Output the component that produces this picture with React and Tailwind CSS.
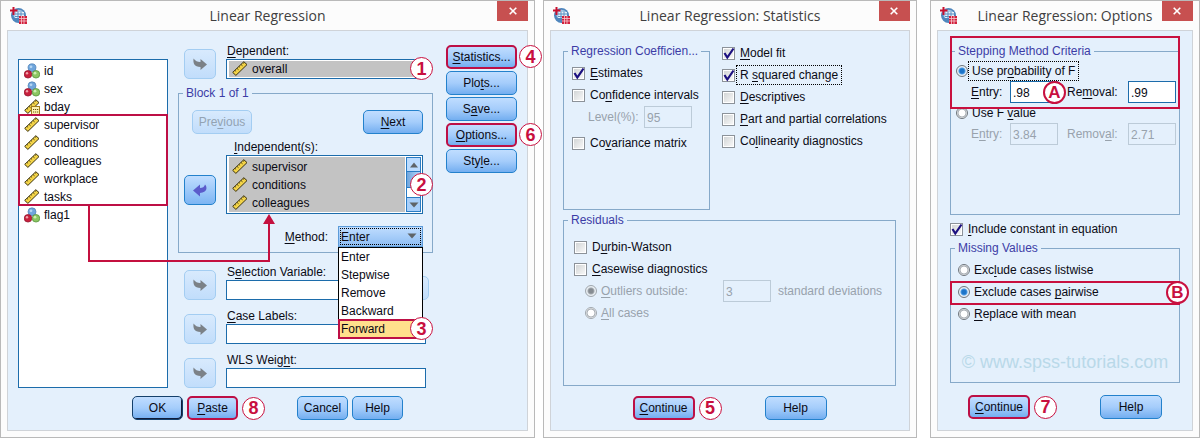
import React from 'react';

const VARIABLES = [
    { name: 'id', type: 'nominal' },
    { name: 'sex', type: 'nominal' },
    { name: 'bday', type: 'date' },
];
const PREDICTORS = ['supervisor', 'conditions', 'colleagues', 'workplace', 'tasks'];
const METHODS = ['Enter', 'Stepwise', 'Remove', 'Backward', 'Forward'];

// "_" marks the access key: "_Paste" underlines the P
const Mnemonic = ({ text }) => {
    const i = text.indexOf('_');
    if (i < 0) return <>{text}</>;
    return (
        <>
            {text.slice(0, i)}
            <span className="underline decoration-1 underline-offset-2">{text[i + 1]}</span>
            {text.slice(i + 2)}
        </>
    );
};

/* ---------- icons ---------- */

const AppIcon = () => (
    <svg width="17" height="17" viewBox="0 0 17 17" aria-hidden="true">
        <circle cx="8.5" cy="8.5" r="7.5" fill="#4f86bd" />
        <path d="M3 5.5a7 7 0 0 1 11 0l-2 5H4z" fill="#a9cbe6" />
        <path d="M6 5h8v6H5z" fill="#e8f1f8" />
        <path d="M5 7h10M5 9.5h9M8 4.5v7M11 4.5v7" stroke="#5b8fc2" strokeWidth="1" />
        <path d="M3.5 0v8M0 3.5h7.5" stroke="#c8102e" strokeWidth="2" />
        <rect x="9" y="9" width="8" height="8" fill="#d2203c" />
        <path d="M9 11.5h8M9 14h8M11.5 9v8M14 9v8" stroke="#f6cdd2" strokeWidth="0.8" />
    </svg>
);

const NominalIcon = () => (
    <svg width="16" height="16" viewBox="0 0 16 16" className="shrink-0" aria-hidden="true">
        <circle cx="8" cy="4.8" r="4" fill="#6fa5dc" stroke="#4d7fb5" strokeWidth="0.7" />
        <circle cx="4" cy="11.3" r="3.8" fill="#c8203c" stroke="#8a1028" strokeWidth="0.7" />
        <circle cx="12" cy="11.3" r="3.8" fill="#8cc662" stroke="#4c8a34" strokeWidth="0.7" />
        <circle cx="7" cy="3.8" r="1.4" fill="#b5d5f3" />
        <circle cx="3" cy="10.2" r="1.2" fill="#f0a0a8" />
        <circle cx="11" cy="10.2" r="1.4" fill="#cdeeb0" />
    </svg>
);

const ScaleIcon = ({ dated }) => (
    <svg width="16" height="16" viewBox="0 0 16 16" className="shrink-0" aria-hidden="true">
        <path d="M0.7 11.4L11.8 0.7L15 3.6L3.9 14.4z" fill="#f5d548" stroke="#3a3210" strokeWidth="1" strokeLinejoin="round" />
        <path d="M3 9.4l1.1 1M5 7.4l1.6 1.4M7 5.5l1.1 1M9 3.5l1.6 1.4M11 1.6l1.1 1" stroke="#3a3210" strokeWidth="0.8" />
        {dated && (
            <>
                <rect x="7.5" y="7.5" width="8" height="8" fill="#fdf3b0" stroke="#a07c1c" />
                <path d="M9 10.5h1.2M11 10.5h1.2M13 10.5h1.2M9 13h1.2M11 13h1.2M13 13h1.2" stroke="#6b5410" strokeWidth="1.2" />
            </>
        )}
    </svg>
);

const MoveIcon = ({ back }) => (
    <svg width="16" height="14" viewBox="0 0 16 14" fill={back ? '#5b5bcb' : '#7b8187'} aria-hidden="true">
        {back ? (
            <path d="M1 7.5L8 1.5V5C10.5 5 12.5 4 13 1.5C15.5 4 15.5 9.5 8 10V13.5z" />
        ) : (
            <path d="M15 7.5L8.5 2V5C6 5.2 3.5 4 1.5 1.5C1 6 2 10 8.5 10V13z" />
        )}
    </svg>
);

const Triangle = ({ up }) => (
    <svg width="10" height="6" viewBox="0 0 10 6" fill="#5f6468" aria-hidden="true">
        <path d={up ? 'M1 5.5L5 0.5L9 5.5z' : 'M0.5 0.5L9.5 0.5L5 5.5z'} />
    </svg>
);

/* ---------- controls ---------- */

const BUTTON_LOOKS = {
    normal: 'border border-[#2381cc]',
    primary: 'border border-[#14406b] shadow-[inset_-1px_-1px_0_#101c38]',
    marked: 'border-2 border-[#bd0f45]',
};

const Button = ({ text, look = 'normal', className = '', disabled }) => (
    <button
        type="button"
        disabled={disabled}
        className={`h-6 shrink-0 rounded-[5px] text-center leading-4 ${className} ${
            disabled
                ? 'border border-[#a3cdf2] bg-linear-to-b from-[#d8eafd] to-[#c1ddfb] text-[#93a3b3]'
                : `bg-linear-to-b from-[#c0ddff] via-[#a5cdfb] to-[#73aef0] text-[#0a0a14] ${BUTTON_LOOKS[look]}`
        }`}
    >
        <Mnemonic text={text} />
    </button>
);

const MoveButton = ({ label, back }) => (
    <button
        type="button"
        aria-label={label}
        className={`flex h-[30px] w-8 shrink-0 items-center justify-center rounded-[5px] border bg-linear-to-b ${
            back ? 'border-[#2381cc] from-[#c0ddff] to-[#7db5f3]' : 'border-[#a3cdf2] from-[#d8eafd] to-[#c1ddfb]'
        }`}
    >
        <MoveIcon back={back} />
    </button>
);

const Checkbox = ({ id, text, checked, focused }) => (
    <div className="flex h-[22px] items-center gap-[2px]">
        <span className="relative size-[13px] shrink-0">
            <input
                id={id}
                type="checkbox"
                defaultChecked={checked}
                className="peer block size-[13px] appearance-none border border-[#8c9299] bg-linear-to-br from-[#cfd2d3] to-[#fbfbfb] shadow-[inset_0_0_0_1px_#ffffff]"
            />
            <svg viewBox="0 0 13 13" className="pointer-events-none absolute inset-0 hidden peer-checked:block" aria-hidden="true">
                <path d="M2.5 6L5.3 10.5L11.5 1.5" fill="none" stroke="#1c1080" strokeWidth="2.2" />
            </svg>
        </span>
        <label
            htmlFor={id}
            className={`px-[3px] whitespace-nowrap ${focused ? 'py-px outline outline-dotted outline-black' : ''}`}
        >
            <Mnemonic text={text} />
        </label>
    </div>
);

const Radio = ({ id, name, text, checked, disabled, focused }) => (
    <div className="flex h-full items-center gap-px">
        <input
            id={id}
            name={name}
            type="radio"
            defaultChecked={checked}
            disabled={disabled}
            className="size-3 shrink-0 appearance-none rounded-full border border-[#6e757c] bg-[radial-gradient(circle,#ffffff_3px,#9aa1a8_4px,#ffffff_5px)] checked:bg-[radial-gradient(circle,#1d74c8_2px,#4b9be4_3px,#e6eef5_4px)] disabled:border-[#a0a7ad] disabled:checked:bg-[radial-gradient(circle,#858b91_2px,#a2a8ad_3px,#e8eef3_4px)]"
        />
        <label
            htmlFor={id}
            className={`px-[3px] whitespace-nowrap ${disabled ? 'text-[#98a2ac]' : ''} ${
                focused ? 'py-px outline outline-dotted outline-black' : ''
            }`}
        >
            <Mnemonic text={text} />
        </label>
    </div>
);

const NumberBox = ({ id, value, disabled, label }) => (
    <input
        id={id}
        type="text"
        aria-label={label}
        defaultValue={value}
        disabled={disabled}
        className="h-[22px] w-12 shrink-0 border border-[#1c6cab] bg-white pt-px pl-[2px] leading-4 disabled:border-[#bccbd8] disabled:bg-transparent disabled:text-[#98a2ac]"
    />
);

const Group = ({ title, className = '', bodyClass = '', children }) => (
    <fieldset className={`min-w-0 border border-[#86a9c9] ${className}`}>
        <legend className="ml-1 px-[3px] leading-4 whitespace-nowrap text-[#3c3ca6]">{title}</legend>
        <div className={bodyClass}>{children}</div>
    </fieldset>
);

const Variable = ({ name, type = 'scale', className = 'h-[18px]' }) => (
    <li className={`flex items-center gap-1 ${className}`}>
        {type === 'nominal' ? <NominalIcon /> : <ScaleIcon dated={type === 'date'} />}
        {name}
    </li>
);

// numbered step marker
const Step = ({ children, className = 'border text-lg' }) => (
    <span
        className={`z-20 flex size-[23px] shrink-0 items-center justify-center rounded-full border-[#c8103f] bg-white leading-none font-bold text-[#c8103f] ${className}`}
    >
        {children}
    </span>
);

const Dialog = ({ title, className = '', bodyClass = '', children }) => (
    <section className={`relative flex min-w-0 flex-col border border-[#b9b9b9] bg-[#fcfcfc] px-[6px] pb-[6px] ${className}`}>
        <header className="flex h-[29px] shrink-0 items-center justify-between">
            <span className="w-[31px] pl-[3px]">
                <AppIcon />
            </span>
            <h2 className="font-['Open_Sans',sans-serif] text-sm leading-5 whitespace-nowrap text-[#404040]">{title}</h2>
            <button
                type="button"
                aria-label="Close"
                className="flex h-5 w-[31px] items-center justify-center self-start bg-[#c75050]"
            >
                <svg width="8" height="8" viewBox="0 0 8 8" stroke="#fff" strokeWidth="1.6" aria-hidden="true">
                    <path d="M0.7 0.7L7.3 7.3M7.3 0.7L0.7 7.3" />
                </svg>
            </button>
        </header>
        <div className={`flex flex-1 flex-col border border-[#cfd3d8] bg-[#e4f0fc] ${bodyClass}`}>{children}</div>
    </section>
);

const TextField = ({ id, text, className = '', children }) => (
    <div className={`flex items-end gap-[10px] pl-[6px] ${className}`}>
        <MoveButton label={`Move to ${text.replace('_', '')}`} />
        <div className="min-w-0 flex-1">
            <label htmlFor={id} className="block pl-px leading-4">
                <Mnemonic text={text} />
            </label>
            <input id={id} type="text" className="block h-5 w-full border border-[#1c6cab] bg-white px-1" />
        </div>
        {children}
    </div>
);

const DialogFooter = ({ step, className = '' }) => (
    <div className={`flex justify-center gap-1 ${className}`}>
        <Button text="_Continue" look="marked" className="w-[62px]" />
        <div className="flex w-[62px] items-center">
            <Step>{step}</Step>
        </div>
        <Button text="Help" className="w-[62px]" />
    </div>
);

/* ---------- dialogs ---------- */

const MethodPicker = () => (
    <div className="flex items-center justify-end gap-[10px]">
        <label htmlFor="method">
            <Mnemonic text="_Method:" />
        </label>
        <div className="relative w-[85px]">
            <select
                id="method"
                defaultValue="Enter"
                className="block h-[21px] w-full appearance-none border border-[#5c9bd8] bg-linear-to-b from-[#c0ddff] to-[#8dbdf3] pl-[2px] leading-4 outline outline-dotted -outline-offset-3 outline-black"
            >
                {METHODS.map(m => (
                    <option key={m}>{m}</option>
                ))}
            </select>
            <span className="pointer-events-none absolute top-[7px] right-[6px]">
                <Triangle />
            </span>
            <ul className="absolute top-full left-0 z-10 w-full border border-black bg-white">
                {METHODS.map(m => (
                    <li
                        key={m}
                        className={`relative h-[18px] pl-[2px] leading-[18px] ${m === 'Forward' ? 'bg-[#ffe08c]' : ''}`}
                    >
                        {m}
                        {m === 'Forward' && (
                            <>
                                <span className="absolute -inset-px border-2 border-[#bd0f45]" />
                                <Step className="absolute -top-[3px] -right-[11px] border text-lg">3</Step>
                            </>
                        )}
                    </li>
                ))}
            </ul>
        </div>
    </div>
);

const RegressionDialog = () => (
    <Dialog title="Linear Regression" className="flex-[521_1_0%]" bodyClass="pb-[10px]">
        <div className="flex px-[10px]">
            <ul className="mt-7 w-[150px] shrink-0 border border-[#1c6cab] bg-white pt-[2px]">
                {VARIABLES.map(v => (
                    <Variable key={v.name} name={v.name} type={v.type} className="h-[18px] pl-[5px]" />
                ))}
                <li className="relative">
                    <ul>
                        {PREDICTORS.map(p => (
                            <Variable key={p} name={p} className="h-[18px] pl-[5px]" />
                        ))}
                    </ul>
                    <span className="absolute -inset-x-px -top-[2px] bottom-0 border-2 border-[#bd0f45]" />
                    {/* connector to the Independent(s) list */}
                    <svg
                        width="190"
                        height="56"
                        viewBox="0 0 190 56"
                        className="pointer-events-none absolute top-full left-[68px] z-10"
                        aria-hidden="true"
                    >
                        <path d="M2 0V55H182V16" fill="none" stroke="#c4103f" strokeWidth="2" />
                        <path d="M182 8L188 18H176z" fill="#c4103f" />
                    </svg>
                </li>
                <Variable name="flag1" type="nominal" className="h-[18px] pl-[5px]" />
            </ul>

            <div className="ml-[10px] min-w-0 flex-1 pt-3">
                <div className="flex items-end gap-[10px] pr-[7px] pl-[6px]">
                    <MoveButton label="Move to Dependent" />
                    <div className="min-w-0 flex-1">
                        <div className="pl-px leading-4">
                            <Mnemonic text="_Dependent:" />
                        </div>
                        <div className="relative border border-[#1c6cab] bg-white p-px pl-[2px]">
                            <ul className="bg-[#c3c3c3]">
                                <Variable name="overall" className="h-4 pl-[3px]" />
                            </ul>
                            <Step className="absolute -top-[3px] -right-2 border text-lg">1</Step>
                        </div>
                    </div>
                </div>

                <Group title="Block 1 of 1" className="mt-[6px]" bodyClass="pt-[9px] pr-[9px] pb-[5px] pl-[5px]">
                    <div className="flex justify-between pl-2">
                        <Button text="Pre_vious" className="w-[60px]" disabled />
                        <Button text="_Next" className="w-[60px]" />
                    </div>
                    <div className="mt-[5px] flex items-end gap-[10px]">
                        <div className="mb-[9px] flex">
                            <MoveButton label="Remove from Independent(s)" back />
                        </div>
                        <div className="min-w-0 flex-1">
                            <div className="pl-2 leading-4">
                                <Mnemonic text="_Independent(s):" />
                            </div>
                            <div className="relative flex border border-[#1c6cab] bg-white p-px pl-[2px]">
                                <ul className="flex-1 bg-[#c3c3c3] pt-px">
                                    {PREDICTORS.slice(0, 3).map(p => (
                                        <Variable key={p} name={p} className="h-[18px] pl-[3px]" />
                                    ))}
                                </ul>
                                <div className="ml-px flex w-[15px] flex-col border-x border-[#2a7cc4] bg-white">
                                    <button
                                        type="button"
                                        aria-label="Scroll up"
                                        className="flex h-[15px] items-center justify-center border-y border-[#2a7cc4] bg-[#bcdcff]"
                                    >
                                        <Triangle up />
                                    </button>
                                    <span className="h-4 border-b border-[#2a7cc4] bg-linear-to-r from-[#6fa5dd] to-[#b8d8fa]" />
                                    <button
                                        type="button"
                                        aria-label="Scroll down"
                                        className="mt-auto flex h-[15px] items-center justify-center border-y border-[#2a7cc4] bg-[#a9d0fb]"
                                    >
                                        <Triangle />
                                    </button>
                                </div>
                                <Step className="absolute top-[17px] -right-[11px] border text-lg">2</Step>
                            </div>
                        </div>
                    </div>
                    <div className="mt-3">
                        <MethodPicker />
                    </div>
                </Group>

                <TextField id="selection" text="S_election Variable:" className="mt-[11px] pr-1">
                    <Button text="Rule..." className="-ml-[7px] w-[60px]" disabled />
                </TextField>
                <TextField id="case-labels" text="_Case Labels:" className="mt-2 pr-[7px]" />
                <TextField id="wls" text="WLS Weig_ht:" className="mt-2 pr-[7px]" />
            </div>

            <div className="ml-[13px] flex w-[71px] shrink-0 flex-col gap-[2px] pt-[14px]">
                <div className="relative flex flex-col">
                    <Button text="_Statistics..." look="marked" />
                    <Step className="absolute top-0 left-[73px] border text-lg">4</Step>
                </div>
                <Button text="Plo_ts..." />
                <Button text="S_ave..." />
                <div className="relative flex flex-col">
                    <Button text="_Options..." look="marked" />
                    <Step className="absolute top-0 left-[73px] border text-lg">6</Step>
                </div>
                <Button text="Sty_le..." />
            </div>
        </div>

        <div className="mt-2 flex justify-center gap-1">
            <Button text="OK" look="primary" className="w-[51px]" />
            <Button text="_Paste" look="marked" className="w-[51px]" />
            <div className="flex w-[51px] items-center">
                <Step>8</Step>
            </div>
            <Button text="Cancel" className="w-[51px]" />
            <Button text="Help" className="w-[51px]" />
        </div>
    </Dialog>
);

const StatisticsDialog = () => (
    <Dialog title="Linear Regression: Statistics" className="ml-2 flex-[360_1_0%]" bodyClass="pt-[11px] pr-[13px] pb-[10px] pl-3">
        <div className="flex">
            <Group
                title="Regression Coefficien..."
                className="mt-px min-h-[167px] w-[147px] shrink-0"
                bodyClass="pt-[3px] pl-2"
            >
                <Checkbox id="estimates" text="_Estimates" checked />
                <Checkbox id="confidence" text="Co_nfidence intervals" />
                <div className="flex items-center pl-4 text-[#98a2ac]">
                    <label htmlFor="level" className="w-14">
                        Level(%):
                    </label>
                    <NumberBox id="level" value="95" disabled />
                </div>
                <div className="mt-1">
                    <Checkbox id="covariance" text="Co_variance matrix" />
                </div>
            </Group>
            <div className="ml-3">
                <Checkbox id="model-fit" text="_Model fit" checked />
                <Checkbox id="r-squared" text="R _squared change" checked focused />
                <Checkbox id="descriptives" text="_Descriptives" />
                <Checkbox id="partial" text="_Part and partial correlations" />
                <Checkbox id="collinearity" text="Co_llinearity diagnostics" />
            </div>
        </div>
        <Group title="Residuals" className="mt-[2px] flex-1" bodyClass="pt-[8px] pl-[10px]">
            <Checkbox id="durbin" text="D_urbin-Watson" />
            <Checkbox id="casewise" text="_Casewise diagnostics" />
            <div className="flex items-center pl-[11px] text-[#98a2ac]">
                <div className="w-[138px]">
                    <Radio id="outliers" name="casewise-scope" text="_Outliers outside:" checked disabled />
                </div>
                <NumberBox value="3" label="Standard deviations" disabled />
                <span className="ml-[7px]">standard deviations</span>
            </div>
            <div className="h-[22px] pl-[11px]">
                <Radio id="all-cases" name="casewise-scope" text="_All cases" disabled />
            </div>
        </Group>
        <DialogFooter step="5" className="mt-[10px]" />
    </Dialog>
);

const CriteriaRow = ({ prefix, entry, removal, entryText, removalText, disabled, children }) => (
    <div className={`relative flex items-center pl-[15px] ${disabled ? 'text-[#98a2ac]' : ''}`}>
        <label htmlFor={`${prefix}-entry`} className="w-[39px]">
            <Mnemonic text={entryText} />
        </label>
        <NumberBox id={`${prefix}-entry`} value={entry} disabled={disabled} />
        <label htmlFor={`${prefix}-removal`} className="ml-[9px] w-[61px]">
            <Mnemonic text={removalText} />
        </label>
        <NumberBox id={`${prefix}-removal`} value={removal} disabled={disabled} />
        {children}
    </div>
);

const OptionsDialog = () => (
    <Dialog title="Linear Regression: Options" className="ml-[13px] flex-[256_1_0%]" bodyClass="px-3 pt-3 pb-[11px]">
        <div className="relative">
            <Group title="Stepping Method Criteria" className="min-h-[172px]" bodyClass="pt-[2px] pl-[5px]">
                <div className="h-5">
                    <Radio id="use-prob" name="criteria" text="Use pr_obability of F" checked focused />
                </div>
                <CriteriaRow prefix="prob" entry=".98" removal=".99" entryText="_Entry:" removalText="Re_moval:">
                    <Step className="absolute top-0 left-[87px] border-2 text-[17px]">A</Step>
                </CriteriaRow>
                <div className="h-5">
                    <Radio id="use-f" name="criteria" text="Use F _value" />
                </div>
                <CriteriaRow prefix="fval" entry="3.84" removal="2.71" entryText="E_ntry:" removalText="Remov_al:" disabled />
            </Group>
            <span className="pointer-events-none absolute inset-x-0 -top-[7px] h-[73px] border-2 border-[#c8103f]" />
        </div>
        <div className="mt-[3px]">
            <Checkbox id="constant" text="_Include constant in equation" checked />
        </div>
        <Group title="Missing Values" className="flex-1" bodyClass="pt-[3px] pb-2">
            <div className="h-[22px] pl-[7px]">
                <Radio id="listwise" name="missing" text="Exc_lude cases listwise" />
            </div>
            <div className="relative h-[22px] pl-[7px]">
                <Radio id="pairwise" name="missing" text="Exclude cases _pairwise" checked />
                <span className="pointer-events-none absolute -inset-x-px top-0 -bottom-[2px] border-2 border-[#c8103f]" />
                <Step className="absolute top-0 -right-[10px] border-2 text-[17px]">B</Step>
            </div>
            <div className="h-[22px] pl-[7px]">
                <Radio id="mean" name="missing" text="_Replace with mean" />
            </div>
            <p className="mt-[25px] text-center text-lg leading-6 whitespace-nowrap text-[#b9d9e9]">
                © www.spss-tutorials.com
            </p>
        </Group>
        <DialogFooter step="7" className="mt-3" />
    </Dialog>
);

const App = () => (
    <main className="flex w-full bg-white font-['Liberation_Sans',Arial,sans-serif] text-xs leading-4 text-[#0a0a14]">
        <RegressionDialog />
        <StatisticsDialog />
        <OptionsDialog />
    </main>
);

export default App;
